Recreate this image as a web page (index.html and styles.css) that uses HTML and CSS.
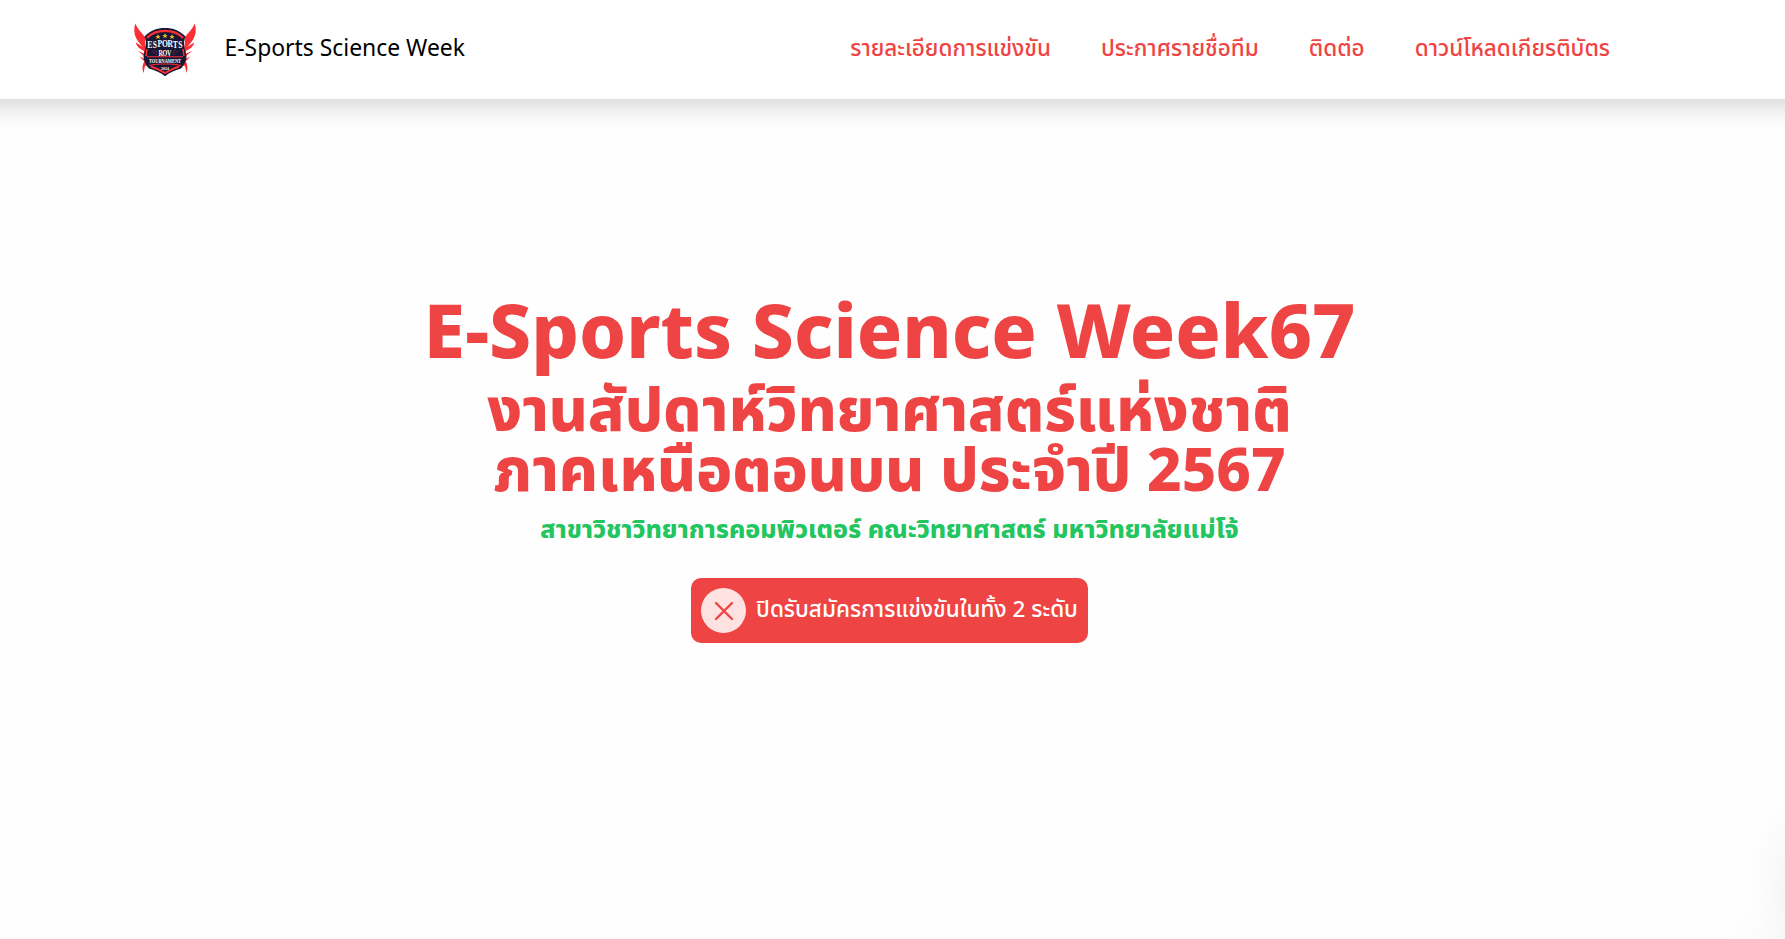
FILE: index.html
```html
<!DOCTYPE html>
<html lang="th">
<head>
<meta charset="utf-8">
<title>E-Sports Science Week</title>
<link rel="stylesheet" href="styles.css">
</head>
<body>
<header class="header">
  <a class="brand">
    <svg class="logo" viewBox="0 0 90 80" width="90" height="80" role="img">
      <g fill="#fb2f33">
        <path id="wing" d="M15.3 13.5C18 20 22 22.500 25.500 28L25 32.500L26 38L25.500 44L27 49L28.500 55L25 56L23.500 63C22 59 22.200 54 24.500 51.500L19.500 46.500L24 48.500V46L18 41L24 43.500V41C19 38.500 16.500 36 15.800 32.500L23 37C17 31 12 24 15.300 13.500Z"/>
        <use href="#wing" transform="matrix(-1 0 0 1 90 0)"/>
      </g>
      <path d="M45 18C53 18 60 20.500 65.500 26.500C62.500 33 65 40 66.500 46C66 52 63.500 56 61 58.500C55 60 49 63 45 66.200C41 63 35 60 29 58.500C26.500 56 24 52 23.500 46C25 40 27.500 33 24.500 26.500C30 20.500 37 18 45 18Z" fill="#171735"/>
      <path d="M27 28C36 18.500 54 18.500 63 28" fill="none" stroke="#fb2f33" stroke-width="2.300"/>
      <path d="M27 39C26.500 42 26.500 44 26 46M63 39C63.500 42 63.500 44 64 46" fill="none" stroke="#fb2f33" stroke-width="1.500"/>
      <path d="M27 46.800H63M29 55.500C35 53.500 39 54 45 54S55 53.500 61 55.500" fill="none" stroke="#fb2f33" stroke-width="1.100"/>
      <path d="M31 56.500C37 58.500 41 60.500 45 63C49 60.500 53 58.500 59 56.500" fill="none" stroke="#fb2f33" stroke-width="2"/>
      <path d="M32 41L37 45M34 39L38 43M58 41L53 45M56 39L52 43" stroke="#7d2639" stroke-width=".8"/>
      <g fill="#e9b52b">
        <path id="star" d="M45 23L45.800 25H47.700L46.200 26.200L46.800 28.200L45 27L43.200 28.200L43.800 26.200L42.300 25H44.200Z"/>
        <use href="#star" x="-7" y=".9"/><use href="#star" x="7" y=".9"/>
      </g>
      <g class="logo-text" text-anchor="middle">
        <g transform="scale(.72 1)">
          <text y="38.300" font-size="10.500" x="41.200 48.300 55.400 62.500 69.600 76.700 83.800" dy="0 -.7 -.4 -.1 .1 .4 .7">ESPORTS</text>
          <text y="45.700" font-size="8.500" x="56.500 62.500 68.500">ROV</text>
        </g>
        <text x="45" y="53.300" font-size="7" textLength="32" lengthAdjust="spacingAndGlyphs">TOURNAMENT</text>
        <text x="45" y="60" font-size="5" textLength="8" lengthAdjust="spacingAndGlyphs">2024</text>
      </g>
    </svg>
    <span class="title">E-Sports Science Week</span>
  </a>
  <nav class="nav">
    <a>รายละเอียดการแข่งขัน</a>
    <a>ประกาศรายชื่อทีม</a>
    <a>ติดต่อ</a>
    <a>ดาวน์โหลดเกียรติบัตร</a>
  </nav>
</header>
<main class="hero">
  <h1>E-Sports Science Week67</h1>
  <h2>งานสัปดาห์วิทยาศาสตร์แห่งชาติ<br>ภาคเหนือตอนบน ประจำปี 2567</h2>
  <p class="faculty">สาขาวิชาวิทยาการคอมพิวเตอร์ คณะวิทยาศาสตร์ มหาวิทยาลัยแม่โจ้</p>
  <div class="notice">
    <span class="notice-icon">
      <svg viewBox="0 0 20 20" width="20" height="20"><path d="M2 2L18 18M18 2L2 18"/></svg>
    </span>
    <span class="notice-text">ปิดรับสมัครการแข่งขันในทั้ง 2 ระดับ</span>
  </div>
</main>
</body>
</html>
```
FILE: styles.css
```css
* { box-sizing: border-box; }

body {
  margin: 0;
  height: 939px;
  overflow: hidden;
  color: #000;
  background:
    radial-gradient(circle at 1835px 875px, rgba(0,0,0,.07) 0, rgba(0,0,0,.012) 70px, transparent 90px),
    radial-gradient(circle at 1840px 980px, rgba(0,0,0,.1) 0, rgba(0,0,0,.015) 80px, transparent 125px),
    #fefefe;
  font-family: "Noto Sans", "Noto Sans Thai", sans-serif;
}

.header {
  height: 99px;
  padding: 0 175px 0 120px;
  display: flex;
  align-items: center;
  justify-content: space-between;
  background: #fff;
  box-shadow: 0 -13px 24px 20px rgba(0,0,0,.17);
  font-size: 22.5px;
  font-weight: 500;
  line-height: 32px;
}

.brand { display: flex; align-items: center; gap: 14.5px; }
.title { padding-bottom: 3px; font-size: 22.9px; font-weight: 420; }
.logo { display: block; }
.logo-text { fill: #fff; font-family: "Liberation Serif", serif; font-weight: 700; }
.nav { padding-bottom: 3px; display: flex; gap: 50px; color: #ef4444; }

.hero {
  padding: 188px 6px 0 0;
  display: flex;
  flex-direction: column;
  align-items: center;
  text-align: center;
}

h1, h2, p { margin: 0; }
h1 { font-size: 75px; line-height: 84px; font-weight: 800; color: #ef4444; }
h2 { margin-top: 7px; font-size: 60px; line-height: 60px; font-weight: 800; color: #ef4444; }
.faculty { margin-top: 14px; font-size: 25px; line-height: 32px; font-weight: 800; color: #22c55e; }

.notice {
  margin-top: 34px;
  padding: 10px;
  display: flex;
  align-items: center;
  gap: 10px;
  border-radius: 10px;
  background: #ef4444;
  color: #fff;
  font-size: 22.5px;
  font-weight: 500;
  line-height: 32px;
}
.notice-text { padding-bottom: 3px; }

.notice-icon {
  width: 45px;
  height: 45px;
  display: flex;
  align-items: center;
  justify-content: center;
  border-radius: 50%;
  background: #fee2e2;
}
.notice-icon path { fill: none; stroke: #ef4444; stroke-width: 2.4; stroke-linecap: round; }
```
